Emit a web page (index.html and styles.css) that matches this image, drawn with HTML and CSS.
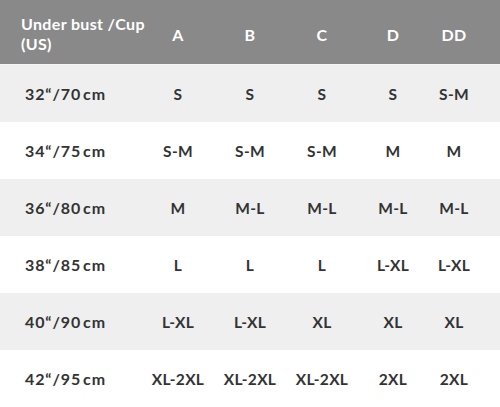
FILE: index.html
```html
<!DOCTYPE html>
<html>
<head>
<meta charset="utf-8">
<link rel="stylesheet" href="styles.css">
</head>
<body>
<div class="chart">
  <div class="row head">
    <div class="label">Under bust /Cup<br>(US)</div>
    <div class="cell">A</div>
    <div class="cell">B</div>
    <div class="cell">C</div>
    <div class="cell">D</div>
    <div class="cell">DD</div>
  </div>
  <div class="row shade">
    <div class="label">32“/70&#8202;cm</div>
    <div class="cell">S</div><div class="cell">S</div><div class="cell">S</div><div class="cell">S</div><div class="cell">S-M</div>
  </div>
  <div class="row">
    <div class="label">34“/75&#8202;cm</div>
    <div class="cell">S-M</div><div class="cell">S-M</div><div class="cell">S-M</div><div class="cell">M</div><div class="cell">M</div>
  </div>
  <div class="row shade">
    <div class="label">36“/80&#8202;cm</div>
    <div class="cell">M</div><div class="cell">M-L</div><div class="cell">M-L</div><div class="cell">M-L</div><div class="cell">M-L</div>
  </div>
  <div class="row">
    <div class="label">38“/85&#8202;cm</div>
    <div class="cell">L</div><div class="cell">L</div><div class="cell">L</div><div class="cell">L-XL</div><div class="cell">L-XL</div>
  </div>
  <div class="row shade">
    <div class="label">40“/90&#8202;cm</div>
    <div class="cell">L-XL</div><div class="cell">L-XL</div><div class="cell">XL</div><div class="cell">XL</div><div class="cell">XL</div>
  </div>
  <div class="row">
    <div class="label">42“/95&#8202;cm</div>
    <div class="cell">XL-2XL</div><div class="cell">XL-2XL</div><div class="cell">XL-2XL</div><div class="cell">2XL</div><div class="cell">2XL</div>
  </div>
</div>
</body>
</html>
```

FILE: styles.css
```css
html, body {
  margin: 0;
  padding: 0;
  background: #ffffff;
}
.chart {
  width: 500px;
  font-family: Lato, "Liberation Sans", sans-serif;
  font-weight: 700;
  font-size: 15.5px;
  letter-spacing: 0.3px;
  color: #333333;
}
.row {
  display: grid;
  grid-template-columns: 142px 72px 72px 72px 70px 52px 20px;
  align-items: center;
  height: 57px;
}
.row.shade {
  background: #efefef;
}
.row.head {
  height: 64px;
  border-bottom: 1px solid #f6f6f6;
  background: #898989;
  color: #ffffff;
  font-size: 16px;
}
.label {
  padding-left: 25px;
  white-space: nowrap;
  font-size: 16px;
  letter-spacing: 0.9px;
}
.head .label {
  padding-left: 21px;
  line-height: 20px;
  padding-top: 4px;
  letter-spacing: 0.35px;
}
.head .cell {
  padding-top: 5px;
}
.cell {
  text-align: center;
  white-space: nowrap;
}
```
